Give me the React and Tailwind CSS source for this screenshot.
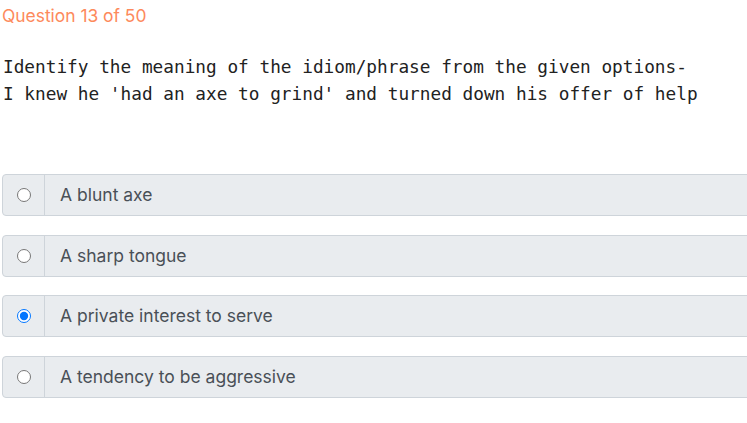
import React, { useState } from 'react';

const options = [
  'A blunt axe',
  'A sharp tongue',
  'A private interest to serve',
  'A tendency to be aggressive',
];

const App = () => {
  const [picked, setPicked] = useState(2);

  return (
    <div className="w-[747px] h-[423px] overflow-hidden bg-white" style={{ fontFamily: 'Inter, "Noto Sans", sans-serif' }}>
      <div className="pl-[2px] pt-[5px] text-[17.4px] leading-[22px] text-[#fd8a5c]">Question 13 of 50</div>

      <div className="mt-[27px] pl-[3px] text-[17.75px] leading-[27px] text-[#222]" style={{ fontFamily: '"DejaVu Sans Mono", "Liberation Mono", monospace' }}>
        <div>Identify the meaning of the idiom/phrase from the given options-</div>
        <div>I knew he 'had an axe to grind' and turned down his offer of help</div>
      </div>

      <div className="mt-[66px] pl-[2px] flex flex-col gap-[18.67px]">
        {options.map((opt, i) => (
          <label key={i} className="flex w-[760px] h-[42px] border border-[#ced4da] rounded-l-[4px] bg-[#e9ecef] cursor-pointer">
            <span className="w-[42px] flex items-center justify-center border-r border-[#ced4da]">
              <input
                type="radio"
                name="answer"
                checked={picked === i}
                onChange={() => setPicked(i)}
                className="w-[14px] h-[14px] accent-[#0075ff]"
              />
            </span>
            <span className="flex items-center pl-[15px] text-[17.5px] text-[#495057]">{opt}</span>
          </label>
        ))}
      </div>
    </div>
  );
};

export default App;
